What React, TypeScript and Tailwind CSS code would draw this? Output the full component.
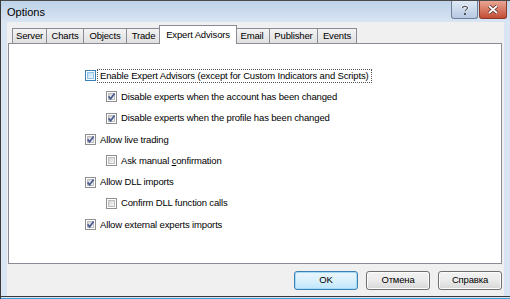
import React from "react";

const tabs = [
  { label: "Server", w: "w-[35px]" },
  { label: "Charts", w: "w-[37px]" },
  { label: "Objects", w: "w-[43px]" },
  { label: "Trade", w: "w-[34px]" },
  { label: "Expert Advisors", w: "w-[78px]", active: true },
  { label: "Email", w: "w-[35px]" },
  { label: "Publisher", w: "w-[48px]" },
  { label: "Events", w: "w-[39px]" },
];

const options = [
  { label: "Enable Expert Advisors (except for Custom Indicators and Scripts)", level: 0, checked: false, focus: true },
  { label: "Disable experts when the account has been changed", level: 1, checked: true },
  { label: "Disable experts when the profile has been changed", level: 1, checked: true },
  { label: "Allow live trading", level: 0, checked: true },
  { label: "Ask manual confirmation", level: 1, checked: false, key: 11 },
  { label: "Allow DLL imports", level: 0, checked: true },
  { label: "Confirm DLL function calls", level: 1, checked: false },
  { label: "Allow external experts imports", level: 0, checked: true },
];

function CheckBox({ checked, hot }: { checked: boolean; hot?: boolean }) {
  return (
    <span
      className={`relative block w-[11px] h-[11px] shrink-0 border bg-white p-[1px] ${
        hot ? "border-[#3c7fb1]" : "border-[#8f8f8f]"
      }`}
    >
      <span
        className={`block w-full h-full border ${
          hot
            ? "border-[#8cc4ea] bg-linear-to-br from-[#bcdcf3] to-[#eef7fd]"
            : "border-[#bdbdbd] bg-linear-to-br from-[#d4d4d4] to-[#f7f7f7]"
        }`}
      />
      {checked && (
        <svg className="absolute left-0 top-0" width="9" height="9" viewBox="0 0 9 9">
          <path d="M1.6 4.4 L3.6 6.8 L7.6 1.4" fill="none" stroke="#4a5c92" strokeWidth="1.7" />
        </svg>
      )}
    </span>
  );
}

function Label({ text, underline }: { text: string; underline?: number }) {
  if (underline === undefined) return <>{text}</>;
  return (
    <>
      {text.slice(0, underline)}
      <span className="underline">{text[underline]}</span>
      {text.slice(underline + 1)}
    </>
  );
}

export default function App() {
  return (
    <div className="w-[510px] h-[299px] flex flex-col bg-[#d9e5f3] border-l border-[#3a3a3a] font-['Liberation_Sans',Arial,sans-serif] text-black select-none">
      {/* title bar */}
      <div className="h-[22px] shrink-0 flex items-start justify-between border-t border-[#4b4b4b] bg-linear-to-b from-[#bed2e9] to-[#d9e5f3]">
        <span className="pl-[6px] pt-[5px] text-[11px] leading-[13px]">Options</span>
        <div className="flex gap-[1px] pr-[3px]">
          <div className="w-[27px] h-[18px] rounded-b-[3px] border border-t-0 border-[#6f7f98] bg-linear-to-b from-[#dfe9f5] to-[#b7c9e1] flex items-center justify-center">
            <svg width="8" height="10" viewBox="0 0 8 10">
              <path d="M1.5 3 C1.5 0.8 6.5 0.8 6.5 3 C6.5 4.6 4 4.6 4 6.6" fill="none" stroke="#ffffff" strokeWidth="2.6" />
              <path d="M1.5 3 C1.5 0.8 6.5 0.8 6.5 3 C6.5 4.6 4 4.6 4 6.6" fill="none" stroke="#4d5460" strokeWidth="1.2" />
              <rect x="3" y="8" width="2" height="2" fill="#4d5460" />
            </svg>
          </div>
          <div className="w-[28px] h-[18px] rounded-b-[3px] border border-t-0 border-[#8a3a2c] bg-linear-to-b from-[#e8a695] to-[#c44b33] flex items-center justify-center">
            <svg width="12" height="9" viewBox="0 0 12 9">
              <path d="M2 1 L10 8 M10 1 L2 8" stroke="#5b2a22" strokeWidth="3.4" />
              <path d="M2 1 L10 8 M10 1 L2 8" stroke="#ffffff" strokeWidth="1.8" />
            </svg>
          </div>
        </div>
      </div>

      {/* client */}
      <div className="flex-1 flex flex-col ml-[6px] mr-[6px] bg-[#f0f0f0] text-[9.5px] tracking-[-0.15px]">
        <div className="h-[21px] shrink-0 flex items-end pl-[5px]">
          {tabs.map((t) =>
            t.active ? (
              <div
                key={t.label}
                className={`${t.w} h-[19px] -mx-[2px] -mb-[1px] relative z-10 border border-b-0 border-[#898c95] bg-white flex items-center justify-center`}
              >
                {t.label}
              </div>
            ) : (
              <div
                key={t.label}
                className={`${t.w} h-[15px] border border-b-0 border-l-0 first:border-l border-[#898c95] bg-linear-to-b from-[#f3f3f3] to-[#e0e0e0] flex items-center justify-center pt-[1px]`}
              >
                {t.label}
              </div>
            )
          )}
        </div>

        <div className="ml-[1px] w-[494px] h-[221px] shrink-0 border border-[#898c95] bg-white pt-[21px] pl-[76px]">
          {options.map((o) => (
            <div
              key={o.label}
              className={`h-[21.3px] flex items-center ${o.level === 1 ? "pl-[21px]" : ""}`}
            >
              <CheckBox checked={o.checked} hot={o.focus} />
              <span
                className={`ml-[1px] px-[2px] leading-[12px] border border-dotted ${
                  o.focus ? "border-[#555]" : "border-transparent"
                }`}
              >
                <Label text={o.label} underline={o.key} />
              </span>
            </div>
          ))}
        </div>

        <div className="flex justify-end gap-[8px] pr-[2px] pt-[7px]">
          <button className="w-[64px] h-[19px] rounded-[3px] border border-[#3c7fb1] bg-linear-to-b from-[#eaf6fd] via-[#d9f0fc] to-[#bee6fd] shadow-[inset_0_0_0_1px_#a6dcfb] text-[9.5px]">
            OK
          </button>
          <button className="w-[64px] h-[19px] rounded-[3px] border border-[#707070] bg-linear-to-b from-[#f2f2f2] via-[#ebebeb] to-[#d6d6d6] shadow-[inset_0_0_0_1px_#fcfcfc] text-[9.5px]">
            Отмена
          </button>
          <button className="w-[64px] h-[19px] rounded-[3px] border border-[#707070] bg-linear-to-b from-[#f2f2f2] via-[#ebebeb] to-[#d6d6d6] shadow-[inset_0_0_0_1px_#fcfcfc] text-[9.5px]">
            Справка
          </button>
        </div>
      </div>

      <div className="h-[3px] shrink-0 border-b border-[#3da1d8] border-t border-t-[#3a3a3a] bg-[#d9e5f3]" />
    </div>
  );
}
